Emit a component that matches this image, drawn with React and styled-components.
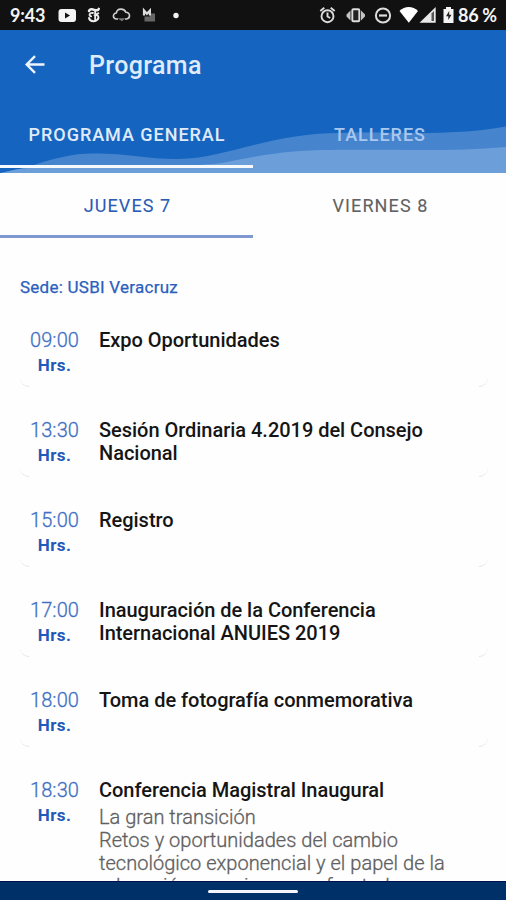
import React from 'react'
import styled, { createGlobalStyle } from 'styled-components'

const GlobalStyle = createGlobalStyle`
    * { box-sizing: border-box; }
    body {
        margin: 0;
        background: #fefefe;
        font-family: Roboto, sans-serif;
    }
`

const Screen = styled.div`
    width: 506px;
    height: 900px;
    display: flex;
    flex-direction: column;
    overflow: hidden;
    background: #fefefe;
`

const StatusBar = styled.div`
    height: 30px;
    flex: none;
    display: flex;
    justify-content: space-between;
    background: #111111;
    color: #f4f4f4;
    svg { display: block; }
`

const StatusText = styled.span`
    width: ${p => p.$width}px;
    margin-left: ${p => p.$left || 0}px;
    font: 700 18px/31px Lato, sans-serif;
    letter-spacing: ${p => p.$spacing || 0}px;
    white-space: nowrap;
`

const StatusSide = styled.div`
    display: flex;
`

const Header = styled.header`
    position: relative;
    height: 143px;
    flex: none;
    display: flex;
    flex-direction: column;
    justify-content: space-between;
    background: #1565c0;
`

const Waves = styled.svg`
    position: absolute;
    left: 0;
    bottom: 0;
`

const TitleBar = styled.div`
    display: flex;
    align-items: center;
    height: 70px;
    padding-left: 23px;
    svg { display: block; }
`

const Title = styled.h1`
    margin: 1px 0 0 42px;
    font-size: 25px;
    font-weight: 500;
    letter-spacing: 0.35px;
    color: #dfeafb;
`

const Tabs = styled.nav`
    position: relative;
    display: flex;
    height: ${p => p.$height}px;
    flex: none;
`

const MainTab = styled.div`
    flex: 1;
    height: 57px;
    padding: 12px 0 0 1px;
    text-align: center;
    font-size: 18px;
    font-weight: 500;
    line-height: 24px;
    letter-spacing: 0.97px;
    white-space: nowrap;
    color: ${p => (p.$active ? '#e0ebfa' : '#aac8ee')};
    border-bottom: 3px solid ${p => (p.$active ? '#f6f9fe' : 'transparent')};
`

const DayTab = styled.div`
    flex: 1;
    height: 65px;
    padding: 21px 0 0 2px;
    text-align: center;
    font-size: 18px;
    font-weight: 400;
    line-height: 24px;
    letter-spacing: 1.1px;
    color: ${p => (p.$active ? '#2a5cb6' : '#626262')};
    -webkit-text-stroke: 0.1px currentColor;
    border-bottom: 3px solid ${p => (p.$active ? '#8098d0' : 'transparent')};
`

const Content = styled.main`
    flex: 1;
    min-height: 0;
    overflow: hidden;
    padding: 38px 18px 0 20px;
`

const Venue = styled.div`
    font-size: 17px;
    line-height: 22px;
    height: 42px;
    letter-spacing: 0.25px;
    color: #2a60bd;
    -webkit-text-stroke: 0.25px #2a60bd;
`

const Card = styled.article`
    position: relative;
    display: flex;
    min-height: 69px;
    margin-bottom: 21px;
    padding-top: 11px;
    border-radius: 9px;

    &::before, &::after {
        content: '';
        position: absolute;
        bottom: 0;
        width: 9px;
        height: 9px;
        border-bottom: 1px solid #e2e2e2;
    }
    &::before { left: 0; border-bottom-left-radius: 9px; }
    &::after { right: 0; border-bottom-right-radius: 9px; }
`

const Time = styled.div`
    width: 69px;
    flex: none;
    text-align: center;
    color: #3f70c4;
    font-size: 20px;
    font-weight: 300;
    line-height: 23px;
    letter-spacing: 0.1px;
    -webkit-text-stroke: 0.3px #3f70c4;
`

const Hours = styled.div`
    font-size: 17px;
    font-weight: 700;
    line-height: 27px;
    letter-spacing: 0.4px;
    color: #2259b8;
    -webkit-text-stroke: 0;
`

const Info = styled.div`
    padding-left: 10px;
    white-space: nowrap;
`

const EventName = styled.div`
    font-size: 20px;
    font-weight: 500;
    line-height: 23px;
    letter-spacing: -0.03px;
    color: #151515;
`

const Detail = styled.div`
    margin-top: 4px;
    font-size: 20px;
    font-weight: 300;
    line-height: 23px;
    letter-spacing: 0.02px;
    color: #606060;
    -webkit-text-stroke: 0.3px #606060;
`

const NavBar = styled.footer`
    height: 19px;
    flex: none;
    display: flex;
    justify-content: center;
    padding-top: 8px;
    background: #003068;
    border-top: 1px solid #02104f;
`

const HomePill = styled.div`
    width: 90px;
    height: 3px;
    border-radius: 2px;
    background: #f5f6fb;
`

const events = [
    { time: '09:00', name: ['Expo Oportunidades'] },
    { time: '13:30', name: ['Sesión Ordinaria 4.2019 del Consejo', 'Nacional'] },
    { time: '15:00', name: ['Registro'] },
    { time: '17:00', name: ['Inauguración de la Conferencia', 'Internacional ANUIES 2019'] },
    { time: '18:00', name: ['Toma de fotografía conmemorativa'] },
    {
        time: '18:30',
        name: ['Conferencia Magistral Inaugural'],
        detail: [
            'La gran transición',
            'Retos y oportunidades del cambio',
            'tecnológico exponencial y el papel de la',
            'educación superior para afrontarlo',
        ],
    },
]

const NotificationIcons = () => (
    <svg width="140" height="30" viewBox="50 0 140 30">
        {/* video */}
        <rect x="58.5" y="9" width="17.5" height="13" rx="3" fill="#f4f4f4" />
        <path d="M65 12.5v6l5-3z" fill="#111" />
        {/* newspaper blackletter T */}
        <g fill="none" stroke="#eee" strokeLinecap="round">
            <path d="M89 11c.8-2.300 3.200-2 5.300-1.200 2 .8 4 .6 4.500-.9" strokeWidth="2.500" />
            <path d="M93 13c-4-.5-4.500 3-1.800 3.300" strokeWidth="1.800" />
            <path d="M89 18c1 4.200 7.500 4 9.200 .6" strokeWidth="2" />
            <path d="M95.200 11v9M98.300 13.200l-2.500 1.500c2 .2 3.200 2 2.400 3.900" strokeWidth="1.900" />
        </g>
        {/* cloud */}
        <path
            d="M118 19h-1.500a3 3 0 0 1-.2-6c.8-5 8-5 9.500-.8 4.800 .3 4.800 6.400 .7 6.800H125"
            fill="none" stroke="#cfcfcf" strokeWidth="1.600" strokeLinejoin="round"
        />
        <path d="M117.500 18.300h8l-3.500 3z" fill="#777" />
        {/* M with tray */}
        <path d="M150 13.500h5v8h-10.500v-5H150z" fill="#666" />
        <path d="M144 15.500v-5l2.900 3.300 3-3.300v5" fill="none" stroke="#ddd" strokeWidth="2.200" />
        <circle cx="176" cy="15.500" r="2.700" fill="#f4f4f4" />
    </svg>
)

const SystemIcons = () => (
    <svg width="140" height="30" viewBox="316 0 140 30">
        {/* alarm */}
        <g fill="none" stroke="#ddd" strokeWidth="1.900">
            <circle cx="327.500" cy="16.200" r="6" />
            <path d="M327.500 12.500v4l2.700 1.500M320.300 11l4-3.200M334.700 11l-4-3.200" />
        </g>
        {/* vibrate */}
        <rect x="352.300" y="9.300" width="7" height="12" rx="1" fill="#222" stroke="#ddd" strokeWidth="1.900" />
        <path d="M350.500 10.500v10l-4-4v-2zM361 10.500v10l4-4v-2z" fill="#c4c4c4" />
        {/* do not disturb */}
        <circle cx="383" cy="15.500" r="7.100" fill="none" stroke="#ddd" strokeWidth="2" />
        <path d="M379 15.500h8" stroke="#ddd" strokeWidth="2.200" />
        {/* wifi */}
        <path d="M399.500 11c5-5.300 13.500-5.300 18.500 0l-9.200 11.800z" fill="#fff" />
        {/* signal */}
        <path d="M419.500 22.700L435.700 7v15.700z" fill="#e8e8e8" />
        <path d="M431.500 13.500l2.500-2.500v10h-2.500z" fill="#555" />
        {/* battery */}
        <path d="M443.500 9h2.500V7h5v2h2.500v14h-10z" fill="#f4f4f4" />
        <path d="M449.200 11l-3.200 5.300h2.300V20l3.200-5.200h-2.300z" fill="#222" />
    </svg>
)

const App = () => {
    return (
        <Screen>
            <GlobalStyle />
            <StatusBar>
                <StatusSide>
                    <StatusText $left={10} $width={40} $spacing={-0.2}>9:43</StatusText>
                    <NotificationIcons />
                </StatusSide>
                <StatusSide>
                    <SystemIcons />
                    <StatusText $left={2} $width={48} $spacing={-0.3}>86 %</StatusText>
                </StatusSide>
            </StatusBar>

            <Header>
                <Waves width="506" height="47" viewBox="0 126 506 47">
                    <path d="M0 173L28 167C55 158 72 153.500 93 153.500C130 153.500 145 159 178 159C225 159 270 133 340 133C390 131 450 137 506 126.500V173z" fill="#4685ce" />
                    <path d="M2 173C25 166 50 166 90 167C140 167 190 167 222 163C260 155 290 150 330 150C400 149 450 152 506 147V173z" fill="#6c9fda" />
                </Waves>
                <TitleBar>
                    <svg width="24" height="24" viewBox="0 0 24 24">
                        <path d="M21.500 11.500H4.500M12 3.200L3.700 11.500l8.300 8.300" fill="none" stroke="#eef4fd" strokeWidth="2.400" />
                    </svg>
                    <Title>Programa</Title>
                </TitleBar>
                <Tabs $height={62}>
                    <MainTab $active>PROGRAMA GENERAL</MainTab>
                    <MainTab>TALLERES</MainTab>
                </Tabs>
            </Header>

            <Tabs $height={65}>
                <DayTab $active>JUEVES 7</DayTab>
                <DayTab>VIERNES 8</DayTab>
            </Tabs>

            <Content>
                <Venue>Sede: USBI Veracruz</Venue>
                {events.map((event) => (
                    <Card key={event.time}>
                        <Time>
                            {event.time}
                            <Hours>Hrs.</Hours>
                        </Time>
                        <Info>
                            {event.name.map((line) => <EventName key={line}>{line}</EventName>)}
                            {event.detail && (
                                <Detail>
                                    {event.detail.map((line) => <div key={line}>{line}</div>)}
                                </Detail>
                            )}
                        </Info>
                    </Card>
                ))}
            </Content>

            <NavBar>
                <HomePill />
            </NavBar>
        </Screen>
    )
}

export default App
